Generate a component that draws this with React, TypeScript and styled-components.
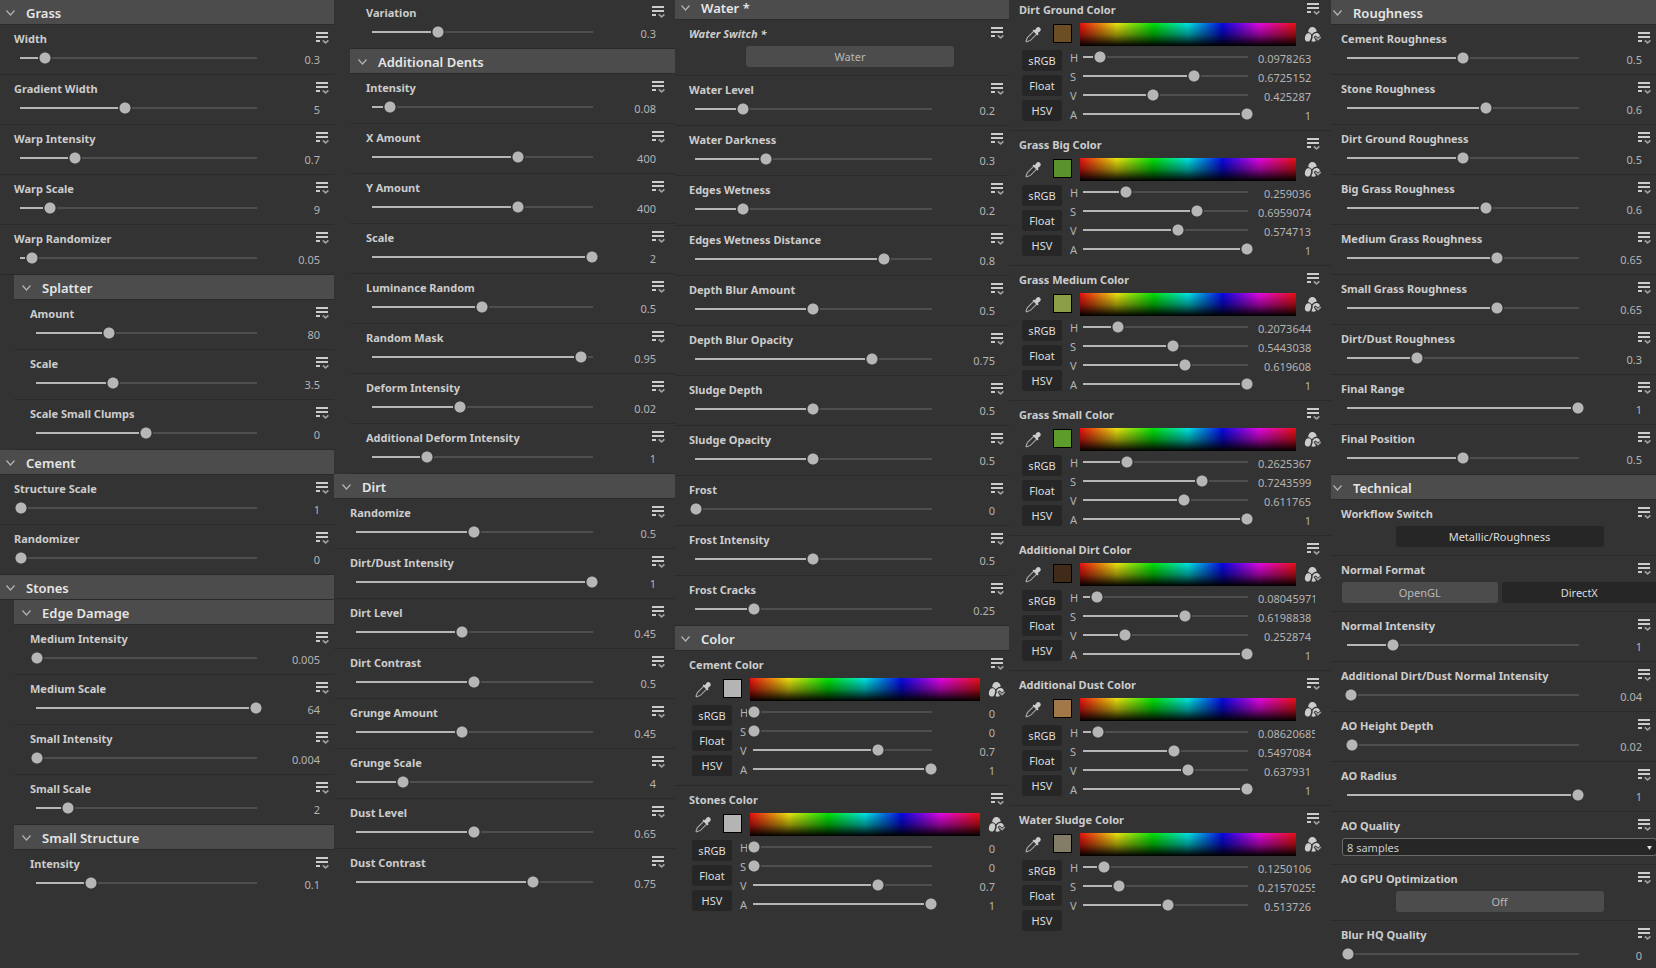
import React, { useId, useState } from 'react';
import styled, { createGlobalStyle, css } from 'styled-components';

const GlobalStyle = createGlobalStyle`
  * { box-sizing: border-box; }
  body { margin: 0; background: #333333; overflow: hidden; }
  button, input, select { font: inherit; color: inherit; }
`;

const Page = styled.main`
  display: grid;
  grid-template-columns: 334fr 341fr 334fr 322fr 325fr;
  height: 100vh;
  overflow: hidden;
  background: #333333;
  color: #b4b4b4;
  font: 12px/16px 'Noto Sans', 'Open Sans', sans-serif;
`;

const Column = styled.div`
  min-width: 0;
  overflow: hidden;
`;

/* Each column is a window on a scrolled parameter list. */
const Scrolled = styled.div<{ $left: number; $top: number; $gutter: number }>`
  --gutter: ${(p) => p.$gutter}px;
  margin-left: -${(p) => p.$left}px;
  margin-top: -${(p) => p.$top}px;
`;

const Nested = styled.div`
  padding-left: 16px;
`;

const Heading = styled.h2`
  margin: 0;
  height: 25px;
  border-bottom: 1px solid #2a2a2a;
  background: #4c4c4c;
`;

const HeadingButton = styled.button`
  display: flex;
  align-items: center;
  gap: 11px;
  width: 100%;
  height: 24px;
  padding: 2px 0 0 8px;
  border: 0;
  background: none;
  color: #e6e6e6;
  font-size: 13px;
  font-weight: 600;
  line-height: 18px;
  text-align: left;
`;

const rowBase = css<{ $last?: boolean }>`
  padding: 6px calc(5px + var(--gutter)) 0 16px;
  border-bottom: 1px solid ${(p) => (p.$last ? 'transparent' : '#2a2a2a')};
`;

const Row = styled.div<{ $height: number; $last?: boolean }>`
  ${rowBase}
  height: ${(p) => p.$height}px;
`;

const RowTop = styled.div`
  display: flex;
  justify-content: space-between;
  height: 16px;
`;

const Label = styled.label<{ $changed?: boolean }>`
  color: #cccccc;
  font-weight: 700;
  font-size: 11px;
  line-height: 16px;
  white-space: nowrap;
  font-style: ${(p) => (p.$changed ? 'italic' : 'normal')};
`;

const IconButton = styled.button`
  display: flex;
  padding: 0;
  border: 0;
  background: none;
  color: #cccccc;
`;

const SliderLine = styled.div`
  display: flex;
  align-items: flex-start;
  height: 19px;
`;

const ParamLine = styled(SliderLine)`
  margin-top: 4px;
`;

const Range = styled.input`
  appearance: none;
  flex: 1;
  min-width: 0;
  height: 14px;
  margin: 0;
  background-color: transparent;
  background-repeat: no-repeat;
  background-size: calc(100% - 12px) 2px;
  background-position: 6px 6px;
  outline: none;

  &::-webkit-slider-thumb {
    appearance: none;
    width: 14px;
    height: 14px;
    background: radial-gradient(circle, #b6b6b6 5px, #333333 6px);
  }
`;

const Value = styled.output`
  width: 57px;
  margin: 0 5px 0 4px;
  padding: 1px 4px 0 0;
  overflow: hidden;
  font-size: 11px;
  line-height: 16px;
  text-align: right;
  white-space: nowrap;
`;

const Toggle = styled.button<{ $on?: boolean }>`
  height: 21px;
  padding: 0;
  border: 0;
  border-radius: 3px;
  background: ${(p) => (p.$on ? '#262626' : '#4c4c4c')};
  color: ${(p) => (p.$on ? '#dddddd' : '#b8b8b8')};
  font-size: 11px;
  line-height: 20px;
  white-space: nowrap;
`;

const Centered = styled.div`
  display: flex;
  justify-content: center;
  margin-right: -7px;
  padding-top: 4px;

  > button { width: 208px; }
`;

const Pair = styled.div`
  display: grid;
  grid-template-columns: 1fr 1fr;
  gap: 4px;
  margin-right: -6px;
  padding: 4px 0 0 1px;
`;

const SelectBox = styled.div`
  display: flex;
  position: relative;
  margin-right: -6px;
  padding: 4px 0 0 1px;
`;

const Select = styled.select`
  appearance: none;
  width: 100%;
  height: 18px;
  padding: 1px 4px 0;
  border: 1px solid #6a6a6a;
  border-radius: 3px;
  background: #262626;
  color: #cccccc;
  font-size: 11px;
  line-height: 16px;
`;

const SelectArrow = styled.svg`
  position: absolute;
  right: 5px;
  top: 12px;
  pointer-events: none;
`;

const Picker = styled.div`
  display: flex;
  align-items: center;
  height: 23px;
  margin: 5px -2px 0 0;
  padding-left: 6px;
`;

const Swatch = styled.input`
  appearance: none;
  align-self: flex-start;
  width: 19px;
  height: 19px;
  margin: 1px 8px 0 11px;
  padding: 0;
  border: 1px solid #000000;
  background: none;

  &::-webkit-color-swatch-wrapper { padding: 0; }
  &::-webkit-color-swatch { border: 0; border-radius: 0; }
`;

const Spectrum = styled.div`
  flex: 1;
  height: 23px;
  margin-right: 8px;
  background:
    linear-gradient(to bottom, rgba(0, 0, 0, 0.02) 0%, rgba(0, 0, 0, 0.4) 50%, #000000 100%),
    linear-gradient(to right, #f01010, #f0e810 17%, #00e808 34%, #00e8e8 50%, #0808e8 66%, #e808e8 83%, #f01010);
`;

const Channels = styled.div`
  display: flex;
  padding: 4px 0 0 3px;
`;

const Modes = styled.div`
  display: grid;
  gap: 4px;
  align-content: start;
  width: 40px;
`;

const ChannelList = styled.div`
  flex: 1;
  min-width: 0;
  padding-left: 8px;
`;

const ChannelName = styled.label`
  width: 7px;
  font-size: 11px;
  line-height: 16px;
`;

function Chevron() {
  return (
    <svg width="9" height="6" viewBox="0 0 9 6" fill="none" stroke="#b4b4b4" strokeWidth="1.2">
      <path d="M0.5 0.5 4.5 5 8.5 0.5" />
    </svg>
  );
}

function MenuIcon() {
  return (
    <svg width="13" height="13" viewBox="0 0 13 13">
      <path d="M0 1h12v2H0zM0 5h12v2H0zM0 9h4v2H0z" fill="#cccccc" />
      <path d="M6.8 9.4 9.6 11.9 12.4 9.4" fill="none" stroke="#a0a0a0" strokeWidth="1.6" />
    </svg>
  );
}

function Eyedropper() {
  return (
    <svg width="17" height="17" viewBox="0 0 17 17">
      <path d="M8.9 5.1 2.4 11.6 1 15.2 1.6 15.8 5.4 14.4 11.9 7.9" fill="none" stroke="#aaaaaa" strokeWidth="1.1" />
      <path d="M7.6 4.6 8.8 3.4 9.9 4.2 11.6 1.8Q13.4 .2 15 1.8 16.6 3.4 15.2 5.2L12.8 7.1 13.6 8.2 12.4 9.4z" fill="#cccccc" />
    </svg>
  );
}

function PaletteIcon() {
  return (
    <svg width="18" height="17" viewBox="0 0 18 17">
      <path d="M8.6 9.4Q10.4 6.6 13.2 7 15.6 7.6 16 10L14 11.6 11.6 9.4 9.6 11 12 15Q9.4 16.2 7.4 15.2 9.2 12.4 8.6 9.4z" fill="#cccccc" />
      <path d="M4.2 6Q4.4 1.8 7.8 1 11.8 .6 12.8 5.6 9.8 5.6 7.8 8.2 6.4 6.4 4.2 6z" fill="#cccccc" />
      <ellipse cx="4" cy="11.4" rx="3" ry="4.2" transform="rotate(15 4 11.4)" fill="#cccccc" />
      <path d="M11.2 11 14 13.6 16.8 11" fill="none" stroke="#a0a0a0" strokeWidth="1.6" />
    </svg>
  );
}

function Slider({ id, start }: { id: string; start: number }) {
  const [position, setPosition] = useState(start);
  const stop = `${position * 100}%`;
  return (
    <Range
      id={id}
      type="range"
      min={0}
      max={1}
      step="any"
      value={position}
      onChange={(e) => setPosition(Number(e.target.value))}
      style={{ backgroundImage: `linear-gradient(to right, #b6b6b6 ${stop}, #4e4e4e ${stop})` }}
    />
  );
}

function Top({ id, name, changed }: { id?: string; name: string; changed?: boolean }) {
  return (
    <RowTop>
      <Label htmlFor={id} $changed={changed}>{name}</Label>
      <IconButton type="button" aria-label={`${name} options`}><MenuIcon /></IconButton>
    </RowTop>
  );
}

function Section({ title }: { title: string }) {
  return (
    <Heading>
      <HeadingButton type="button"><Chevron />{title}</HeadingButton>
    </Heading>
  );
}

type ParamData = [name: string, position: number, value: string];

function Param({ data: [name, position, value], last }: { data: ParamData; last?: boolean }) {
  const id = useId();
  return (
    <Row $height={50} $last={last}>
      <Top id={id} name={name} />
      <ParamLine>
        <Slider id={id} start={position} />
        <Value htmlFor={id}>{value}</Value>
      </ParamLine>
    </Row>
  );
}

function Params({ items, open }: { items: ParamData[]; open?: boolean }) {
  return (
    <>
      {items.map((item, i) => (
        <Param key={item[0]} data={item} last={open && i === items.length - 1} />
      ))}
    </>
  );
}

function Switch({ name, text, on, changed }: { name: string; text: string; on?: boolean; changed?: boolean }) {
  const id = useId();
  return (
    <Row $height={56}>
      <Top id={id} name={name} changed={changed} />
      <Centered><Toggle id={id} type="button" $on={on}>{text}</Toggle></Centered>
    </Row>
  );
}

function Channel({ name, value }: { name: string; value: string }) {
  const id = useId();
  return (
    <SliderLine>
      <ChannelName htmlFor={id}>{name}</ChannelName>
      <Slider id={id} start={Number(value)} />
      <Value htmlFor={id}>{value}</Value>
    </SliderLine>
  );
}

interface ColorData {
  name: string;
  hex: string;
  channels: string[];
}

function ColorParam({ data, last }: { data: ColorData; last?: boolean }) {
  const id = useId();
  return (
    <Row $height={135} $last={last}>
      <Top id={id} name={data.name} />
      <Picker>
        <IconButton type="button" aria-label="Pick color"><Eyedropper /></IconButton>
        <Swatch id={id} type="color" defaultValue={data.hex} />
        <Spectrum />
        <IconButton type="button" aria-label="Palettes"><PaletteIcon /></IconButton>
      </Picker>
      <Channels>
        <Modes>
          <Toggle type="button" $on>sRGB</Toggle>
          <Toggle type="button" $on>Float</Toggle>
          <Toggle type="button" $on>HSV</Toggle>
        </Modes>
        <ChannelList>
          {data.channels.map((value, i) => (
            <Channel key={'HSVA'[i]} name={'HSVA'[i]} value={value} />
          ))}
        </ChannelList>
      </Channels>
    </Row>
  );
}

const colors: ColorData[] = [
  { name: 'Dirt Ground Color', hex: '#6c4e24', channels: ['0.0978263', '0.6725152', '0.425287', '1'] },
  { name: 'Grass Big Color', hex: '#5a932d', channels: ['0.259036', '0.6959074', '0.574713', '1'] },
  { name: 'Grass Medium Color', hex: '#8b9e48', channels: ['0.2073644', '0.5443038', '0.619608', '1'] },
  { name: 'Grass Small Color', hex: '#5c9c2b', channels: ['0.2625367', '0.7243599', '0.611765', '1'] },
  { name: 'Additional Dirt Color', hex: '#402b18', channels: ['0.08045971', '0.6198838', '0.252874', '1'] },
  { name: 'Additional Dust Color', hex: '#a37849', channels: ['0.08620685', '0.5497084', '0.637931', '1'] },
  { name: 'Water Sludge Color', hex: '#837c67', channels: ['0.1250106', '0.21570255', '0.513726'] },
];

export default function App() {
  const quality = useId();
  return (
    <>
      <GlobalStyle />
      <Page>
        <Column>
          <Scrolled $left={2} $top={0} $gutter={0}>
            <Section title="Grass" />
            <Params items={[
              ['Width', 0.1, '0.3'],
              ['Gradient Width', 0.443, '5'],
              ['Warp Intensity', 0.23, '0.7'],
              ['Warp Scale', 0.125, '9'],
              ['Warp Randomizer', 0.046, '0.05'],
            ]} />
            <Nested>
              <Section title="Splatter" />
              <Params items={[
                ['Amount', 0.33, '80'],
                ['Scale', 0.345, '3.5'],
                ['Scale Small Clumps', 0.497, '0'],
              ]} />
            </Nested>
            <Section title="Cement" />
            <Params items={[
              ['Structure Scale', 0, '1'],
              ['Randomizer', 0, '0'],
            ]} />
            <Section title="Stones" />
            <Nested>
              <Section title="Edge Damage" />
              <Params items={[
                ['Medium Intensity', 0, '0.005'],
                ['Medium Scale', 1, '64'],
                ['Small Intensity', 0, '0.004'],
                ['Small Scale', 0.14, '2'],
              ]} />
              <Section title="Small Structure" />
              <Params open items={[['Intensity', 0.247, '0.1']]} />
            </Nested>
          </Scrolled>
        </Column>

        <Column>
          <Scrolled $left={0} $top={1} $gutter={5}>
            <Nested>
              <Params items={[['Variation', 0.297, '0.3']]} />
              <Section title="Additional Dents" />
              <Params items={[
                ['Intensity', 0.077, '0.08'],
                ['X Amount', 0.663, '400'],
                ['Y Amount', 0.663, '400'],
                ['Scale', 1, '2'],
                ['Luminance Random', 0.497, '0.5'],
                ['Random Mask', 0.95, '0.95'],
                ['Deform Intensity', 0.397, '0.02'],
                ['Additional Deform Intensity', 0.247, '1'],
              ]} />
            </Nested>
            <Section title="Dirt" />
            <Params open items={[
              ['Randomize', 0.497, '0.5'],
              ['Dirt/Dust Intensity', 1, '1'],
              ['Dirt Level', 0.447, '0.45'],
              ['Dirt Contrast', 0.497, '0.5'],
              ['Grunge Amount', 0.447, '0.45'],
              ['Grunge Scale', 0.195, '4'],
              ['Dust Level', 0.497, '0.65'],
              ['Dust Contrast', 0.75, '0.75'],
            ]} />
          </Scrolled>
        </Column>

        <Column>
          <Scrolled $left={2} $top={5} $gutter={0}>
            <Section title="Water *" />
            <Switch name="Water Switch *" text="Water" changed />
            <Params items={[
              ['Water Level', 0.2, '0.2'],
              ['Water Darkness', 0.297, '0.3'],
              ['Edges Wetness', 0.2, '0.2'],
              ['Edges Wetness Distance', 0.8, '0.8'],
              ['Depth Blur Amount', 0.497, '0.5'],
              ['Depth Blur Opacity', 0.75, '0.75'],
              ['Sludge Depth', 0.497, '0.5'],
              ['Sludge Opacity', 0.497, '0.5'],
              ['Frost', 0, '0'],
              ['Frost Intensity', 0.497, '0.5'],
              ['Frost Cracks', 0.247, '0.25'],
            ]} />
            <Section title="Color" />
            <ColorParam data={{ name: 'Cement Color', hex: '#b4b4b4', channels: ['0', '0', '0.7', '1'] }} />
            <ColorParam last data={{ name: 'Stones Color', hex: '#b4b4b4', channels: ['0', '0', '0.7', '1'] }} />
          </Scrolled>
        </Column>

        <Column>
          <Scrolled $left={6} $top={4} $gutter={6}>
            {colors.map((color, i) => (
              <ColorParam key={color.name} data={color} last={i === colors.length - 1} />
            ))}
          </Scrolled>
        </Column>

        <Column>
          <Scrolled $left={6} $top={0} $gutter={0}>
            <Section title="Roughness" />
            <Params items={[
              ['Cement Roughness', 0.5, '0.5'],
              ['Stone Roughness', 0.6, '0.6'],
              ['Dirt Ground Roughness', 0.5, '0.5'],
              ['Big Grass Roughness', 0.6, '0.6'],
              ['Medium Grass Roughness', 0.647, '0.65'],
              ['Small Grass Roughness', 0.647, '0.65'],
              ['Dirt/Dust Roughness', 0.3, '0.3'],
              ['Final Range', 1, '1'],
              ['Final Position', 0.5, '0.5'],
            ]} />
            <Section title="Technical" />
            <Switch name="Workflow Switch" text="Metallic/Roughness" on />
            <Row $height={56}>
              <Top name="Normal Format" />
              <Pair>
                <Toggle type="button">OpenGL</Toggle>
                <Toggle type="button" $on>DirectX</Toggle>
              </Pair>
            </Row>
            <Params items={[
              ['Normal Intensity', 0.195, '1'],
              ['Additional Dirt/Dust Normal Intensity', 0.015, '0.04'],
              ['AO Height Depth', 0.018, '0.02'],
              ['AO Radius', 1, '1'],
            ]} />
            <Row $height={53}>
              <Top id={quality} name="AO Quality" />
              <SelectBox>
                <Select id={quality} defaultValue="8">
                  <option value="4">4 samples</option>
                  <option value="8">8 samples</option>
                  <option value="16">16 samples</option>
                </Select>
                <SelectArrow width="5" height="4" viewBox="0 0 5 4">
                  <path d="M0 0h5L2.5 4z" fill="#dddddd" />
                </SelectArrow>
              </SelectBox>
            </Row>
            <Switch name="AO GPU Optimization" text="Off" />
            <Params items={[['Blur HQ Quality', 0, '0']]} />
          </Scrolled>
        </Column>
      </Page>
    </>
  );
}
